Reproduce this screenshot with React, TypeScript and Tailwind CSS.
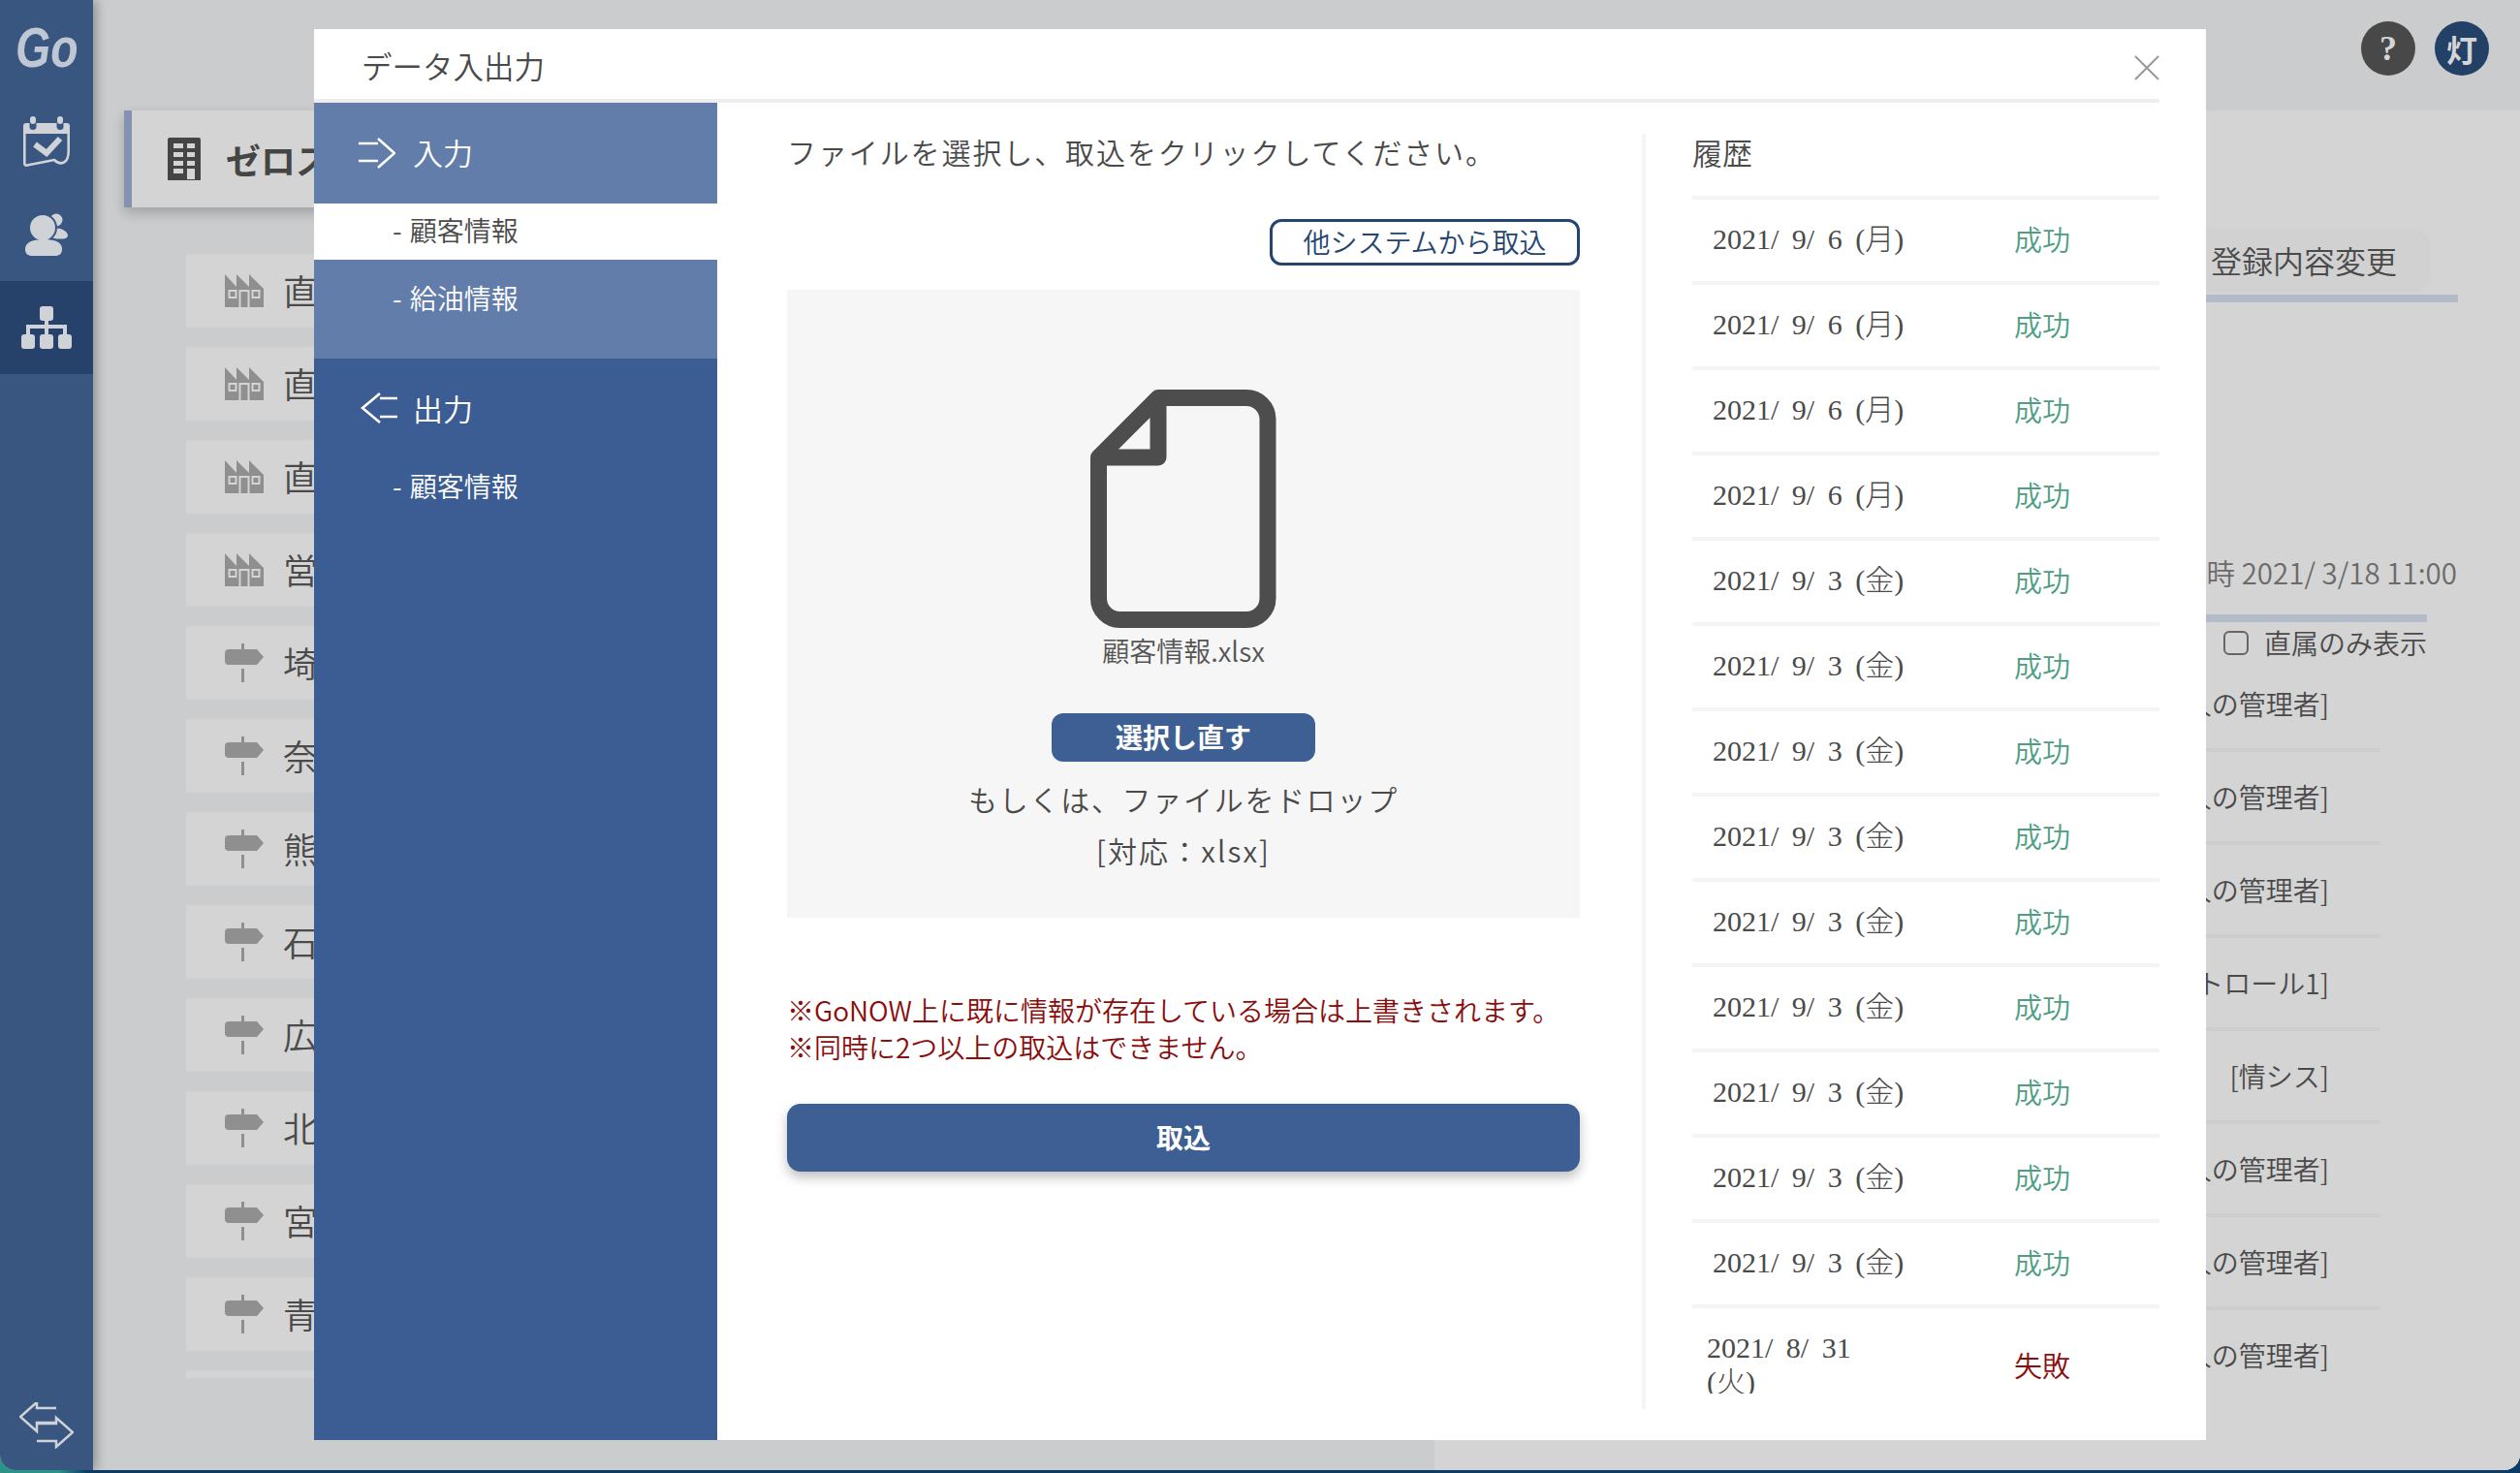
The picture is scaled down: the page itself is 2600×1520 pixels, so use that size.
import React from "react";

const L = "#cfd2d7";

function Calendar() {
  return (
    <svg width="48" height="52" viewBox="0 0 48 52">
      <path d="M3 7H45a3 3 0 0 1 3 3V18H0V10a3 3 0 0 1 3-3Z" fill={L} />
      <rect x="6.5" y="0" width="7" height="14" rx="3.5" fill="#395680" />
      <rect x="7" y="0" width="6" height="8" rx="3" fill={L} />
      <rect x="34.5" y="0" width="7" height="14" rx="3.5" fill="#395680" />
      <rect x="35" y="0" width="6" height="8" rx="3" fill={L} />
      <path d="M1.3 17V48.5Q1.3 51 4 50.5L32 45Q37 50 42 47.5Q46.7 45 46.7 36V17" fill="none" stroke={L} strokeWidth="2.6" strokeLinejoin="round" />
      <path d="M12 29L24 38L38 23" fill="none" stroke={L} strokeWidth="6" />
    </svg>
  );
}

function Users() {
  return (
    <svg width="44" height="44" viewBox="0 0 44 44">
      <circle cx="32" cy="7" r="6.5" fill={L} />
      <path d="M30 16C34 14 44 18 44 23C44 26 40 26.5 36 26.5C33 26.5 29 26 28 25C32 22 32 19 30 16Z" fill={L} />
      <circle cx="18" cy="15" r="14" fill={L} stroke="#395680" strokeWidth="2" />
      <path d="M0 37C0 29 10 27 19 27C29 27 38 29 38 37C38 42 35 44 31 44H7C3 44 0 42 0 37Z" fill={L} />
    </svg>
  );
}

function Org() {
  return (
    <svg width="52" height="44" viewBox="0 0 52 44">
      <rect x="19" y="0" width="14" height="15" rx="3" fill={L} />
      <rect x="0" y="29" width="14" height="15" rx="3" fill={L} />
      <rect x="19" y="29" width="14" height="15" rx="3" fill={L} />
      <rect x="38" y="29" width="14" height="15" rx="3" fill={L} />
      <path d="M26 14V30M7 30V21H45V30" fill="none" stroke={L} strokeWidth="4" />
    </svg>
  );
}

function SwapArrows() {
  return (
    <svg width="56" height="48" viewBox="0 0 56 48">
      <path d="M38 6H18V0L1 15L18 30V21H38" fill="none" stroke={L} strokeWidth="2.5" />
      <path d="M18 22H38V16L55 31L38 46V40H18" fill="none" stroke={L} strokeWidth="2.5" />
    </svg>
  );
}

function RightArrow() {
  return (
    <svg width="38" height="32" viewBox="0 0 38 32">
      <path d="M0 6H20M0 24H20M20 1L37 16L20 31" fill="none" stroke="#fff" strokeWidth="2.6" />
    </svg>
  );
}

function LeftArrow() {
  return (
    <svg width="38" height="32" viewBox="0 0 38 32">
      <path d="M38 6H20M38 25H20M20 1L2 16L20 31" fill="none" stroke="#fff" strokeWidth="2.6" />
    </svg>
  );
}

function Building() {
  const c = "#d4d4d4";
  return (
    <svg width="34" height="44" viewBox="0 0 34 44">
      <path d="M2 0H32a2 2 0 0 1 2 2V44H0V2a2 2 0 0 1 2-2Z" fill="#454545" />
      {[6, 15, 24].map((y) => (
        <React.Fragment key={y}>
          <rect x="6" y={y} width="10" height="5" fill={c} />
          <rect x="20" y={y} width="8" height="5" fill={c} />
        </React.Fragment>
      ))}
      <rect x="6" y="32" width="10" height="5" fill={c} />
      <rect x="20" y="32" width="8" height="11" fill={c} />
    </svg>
  );
}

function Factory() {
  return (
    <svg width="40" height="34" viewBox="0 0 40 34" className="shrink-0">
      <path d="M0 34V0L12 13V0L25 13V0L40 15V34Z" fill="#8f8f8f" />
      <rect x="4.5" y="17" width="7" height="7" fill="none" stroke="#d4d4d4" strokeWidth="2" />
      <rect x="28.5" y="17" width="7" height="7" fill="none" stroke="#d4d4d4" strokeWidth="2" />
      <path d="M15.5 34V17H24.5V34" fill="none" stroke="#d4d4d4" strokeWidth="2" />
    </svg>
  );
}

function Signpost() {
  return (
    <svg width="40" height="40" viewBox="0 0 40 40" className="shrink-0">
      <rect x="17" y="0" width="3" height="7" fill="#8f8f8f" />
      <path d="M4 6H33L40 14L33 22H4a4 4 0 0 1-4-4V10a4 4 0 0 1 4-4Z" fill="#8f8f8f" />
      <rect x="17" y="26" width="3" height="14" fill="#8f8f8f" />
    </svg>
  );
}

function FileIcon() {
  return (
    <svg width="192" height="246" viewBox="0 0 192 246" className="shrink-0">
      <path
        d="M8.5 70L70 8.5H161a22 22 0 0 1 22 22V215.5a22 22 0 0 1-22 22H30.5a22 22 0 0 1-22-22ZM70 8.5V70H8.5"
        fill="none"
        stroke="#4d4d4d"
        strokeWidth="17"
        strokeLinejoin="round"
      />
    </svg>
  );
}

const leftRows = ["直", "直", "直", "営", "埼", "奈", "熊", "石", "広", "北", "宮", "青", ""];
const rightRows = [
  "[法人の管理者]",
  "[法人の管理者]",
  "[法人の管理者]",
  "[コントロール1]",
  "[情シス]",
  "[法人の管理者]",
  "[法人の管理者]",
  "[法人の管理者]",
];
const history = [
  "2021/ 9/ 6 (月)",
  "2021/ 9/ 6 (月)",
  "2021/ 9/ 6 (月)",
  "2021/ 9/ 6 (月)",
  "2021/ 9/ 3 (金)",
  "2021/ 9/ 3 (金)",
  "2021/ 9/ 3 (金)",
  "2021/ 9/ 3 (金)",
  "2021/ 9/ 3 (金)",
  "2021/ 9/ 3 (金)",
  "2021/ 9/ 3 (金)",
  "2021/ 9/ 3 (金)",
  "2021/ 9/ 3 (金)",
];

export default function App() {
  return (
    <div className="relative h-[1520px] w-[2600px] overflow-hidden bg-[linear-gradient(90deg,#2b9488_0,#2b9488_60px,#0b3b66_90px,#0b3b66_100%)] font-['Noto_Sans_CJK_JP',sans-serif] font-[350] text-[#4a4a4a]">
      {/* Window */}
      <div className="flex h-[1517px] w-[2600px] overflow-hidden rounded-b-[16px] bg-[#cbccce]">
        {/* Sidebar */}
        <div className="relative z-10 flex w-[96px] shrink-0 flex-col items-center bg-[#395680] pb-[22px] shadow-[4px_0_10px_rgba(0,0,0,0.28)]">
          <div className="flex h-[98px] w-full items-center justify-center">
            <span className="scale-x-[0.8] font-['Liberation_Sans',sans-serif] text-[58px] font-bold italic leading-none text-[#bfc7d4]">Go</span>
          </div>
          <div className="flex h-[96px] w-full items-center justify-center"><Calendar /></div>
          <div className="flex h-[96px] w-full items-center justify-center"><Users /></div>
          <div className="flex h-[96px] w-full items-center justify-center bg-[#26426b]"><Org /></div>
          <div className="mt-auto"><SwapArrows /></div>
        </div>

        {/* Main area */}
        <div className="flex min-w-0 flex-1 flex-col">
          <div className="flex h-[114px] shrink-0 items-start justify-end gap-[20px] pr-[32px] pt-[22px]">
            <div className="flex h-[56px] w-[56px] items-center justify-center rounded-full bg-[#484848] font-['Liberation_Serif',serif] text-[36px] font-bold leading-none text-[#d5d5d5]">?</div>
            <div className="flex h-[56px] w-[56px] items-center justify-center rounded-full bg-[#234067] text-[32px] font-bold leading-none text-[#d5d5d5]">灯</div>
          </div>
          <div className="flex min-h-0 flex-1">
            {/* Left column */}
            <div className="w-[1384px] shrink-0 pl-[32px]">
              <div className="flex h-[100px] w-[1300px] items-center border-l-[8px] border-[#8492af] bg-[#d4d4d4] pl-[37px] shadow-[0_6px_12px_rgba(0,0,0,0.2)]">
                <Building />
                <span className="ml-[26px] text-[36px] font-bold leading-none text-[#454545]">ゼロスタート株式会社</span>
              </div>
              <div className="ml-[64px] mt-[48px] flex h-[1160px] w-[1200px] flex-col gap-[20px] overflow-hidden">
                {leftRows.map((t, i) => (
                  <div key={i} className="flex h-[76px] shrink-0 items-center bg-[#d4d4d4] pl-[40px]">
                    {i < 4 ? <Factory /> : <Signpost />}
                    <span className="mb-[2px] ml-[20px] text-[36px] leading-none">{t}</span>
                  </div>
                ))}
              </div>
            </div>
            {/* Right column */}
            <div className="flex flex-1 flex-col items-end bg-[#d4d4d4]">
              <div className="mr-[96px] mt-[126px] flex h-[58px] w-[400px] items-center justify-end rounded-[14px] bg-[#d1d1d1] pb-[2px] pr-[31px] text-[32px] shadow-[0_0_8px_rgba(0,0,0,0.05)]">登録内容変更</div>
              <div className="mr-[64px] mt-[6px] h-[8px] w-[400px] bg-[#b3bbc8]" />
              <div className="mr-[65px] mt-[258px] flex h-[40px] items-center text-[29.5px] text-[#6b6b6b]">更新日時 2021/ 3/18 11:00</div>
              <div className="mr-[96px] mt-[24px] h-[8px] w-[400px] bg-[#b3bbc8]" />
              <div className="mr-[96px] mt-[6px] flex h-[30px] items-center text-[28px]">
                <span className="mr-[16px] h-[25px] w-[26px] rounded-[6px] border-2 border-[#666]" />
                直属のみ表示
              </div>
              <div className="mr-[144px] mt-[2px] flex w-[600px] flex-col">
                {rightRows.map((t, i) => (
                  <div key={i} className={i < rightRows.length - 1 ? "flex h-[96px] items-center justify-end border-b-4 border-[#cdcdcd] pr-[53px] text-[28px]" : "flex h-[92px] items-center justify-end pr-[53px] text-[28px]"}>{t}</div>
                ))}
              </div>
            </div>
          </div>
        </div>
      </div>

      {/* Modal */}
      <div className="absolute left-[324px] top-[30px] z-20 flex h-[1456px] w-[1952px] flex-col bg-white">
        <div className="mr-[48px] flex h-[76px] shrink-0 items-center justify-between border-b-4 border-[#eeeeee] pl-[49px]">
          <span className="mt-[3px] text-[31.5px] leading-none">データ入出力</span>
          <svg width="26" height="26" viewBox="0 0 26 26" className="mt-[7px]">
            <path d="M1 1L25 25M25 1L1 25" stroke="#999" strokeWidth="2" fill="none" />
          </svg>
        </div>
        <div className="flex min-h-0 flex-1">
          {/* Left panel */}
          <div className="flex w-[416px] shrink-0 flex-col bg-[#3c5d94] text-white">
            <div className="flex h-[104px] items-center gap-[18px] bg-[#637dab] pl-[46px]">
              <RightArrow />
              <span className="mb-[3px] text-[31px] leading-none">入力</span>
            </div>
            <div className="flex h-[58px] items-center bg-white pb-[5px] pl-[81px] text-[28px] leading-none text-[#4a4a4a] [word-spacing:2px]">- 顧客情報</div>
            <div className="flex h-[102px] items-start bg-[#637dab] pl-[81px] pt-[19px] text-[28px] leading-[40px] [word-spacing:2px]">- 給油情報</div>
            <div className="flex h-[106px] items-center gap-[16px] pb-[4px] pl-[48px]">
              <LeftArrow />
              <span className="mb-[2px] text-[31px] leading-none">出力</span>
            </div>
            <div className="flex h-[50px] items-center pl-[81px] text-[28px] leading-none [word-spacing:2px]">- 顧客情報</div>
          </div>

          {/* Centre */}
          <div className="ml-[72px] flex w-[818px] shrink-0 flex-col">
            <div className="mt-[30px] flex h-[40px] items-center text-[30px] leading-none tracking-[1.9px]">ファイルを選択し、取込をクリックしてください。</div>
            <div className="mt-[50px] flex h-[48px] w-[320px] items-center justify-center self-end rounded-[12px] border-[3px] border-[#254570] pb-[3px] text-[28px] leading-none text-[#254570]">他システムから取込</div>
            <div className="mt-[25px] flex h-[648px] flex-col items-center bg-[#f6f6f6] pt-[103px]">
              <FileIcon />
              <div className="mt-[3px] flex h-[40px] items-center text-[28px] leading-none text-[#555]">顧客情報.xlsx</div>
              <div className="mt-[45px] flex h-[50px] w-[272px] items-center justify-center rounded-[12px] bg-[#3e5f94] pb-[2px] text-[28px] font-bold leading-none text-white">選択し直す</div>
              <div className="mt-[18px] flex h-[40px] items-center text-[30px] leading-none tracking-[1.7px]">もしくは、ファイルをドロップ</div>
              <div className="mt-[13px] flex h-[40px] items-center text-[30px] leading-none tracking-[2.1px]">[対応：xlsx]</div>
            </div>
            <div className="mt-[76px] text-[28px] leading-[38px] text-[#8b0d0d]">
              <div>※GoNOW上に既に情報が存在している場合は上書きされます。</div>
              <div>※同時に2つ以上の取込はできません。</div>
            </div>
            <div className="mt-[40px] flex h-[70px] items-center justify-center rounded-[14px] bg-[#3e5f94] pb-[2px] text-[28px] font-bold leading-none text-white shadow-[0_6px_12px_rgba(0,0,0,0.25)]">取込</div>
          </div>

          {/* Vertical rule */}
          <div className="ml-[64px] mt-[32px] h-[1316px] w-[4px] shrink-0 bg-[#f5f5f5]" />

          {/* History */}
          <div className="ml-[48px] mt-[32px] flex w-[482px] shrink-0 flex-col">
            <div className="flex h-[40px] items-center pb-[4px] text-[31px] leading-none">履歴</div>
            <div className="mt-[24px] h-[1236px] overflow-hidden">
              {history.map((d, i) => (
                <div key={i} className="flex h-[88px] items-center border-t-4 border-[#f5f5f5] pb-[3px]">
                  <span className="w-[332px] pl-[21px] font-['Liberation_Serif','Noto_Sans_CJK_JP',serif] text-[30px] font-light leading-none [word-spacing:6px]">{d}</span>
                  <span className="text-[29px] leading-none text-[#4d9e82]">成功</span>
                </div>
              ))}
              <div className="flex h-[120px] items-center border-t-4 border-[#f5f5f5]">
                <span className="w-[332px] pl-[15px] font-['Liberation_Serif','Noto_Sans_CJK_JP',serif] text-[30px] font-light leading-[35px] [word-spacing:6px]">
                  2021/ 8/ 31
                  <br />
                  (火)
                </span>
                <span className="text-[29px] leading-none text-[#8b0d0d]">失敗</span>
              </div>
            </div>
          </div>
        </div>
      </div>
    </div>
  );
}
